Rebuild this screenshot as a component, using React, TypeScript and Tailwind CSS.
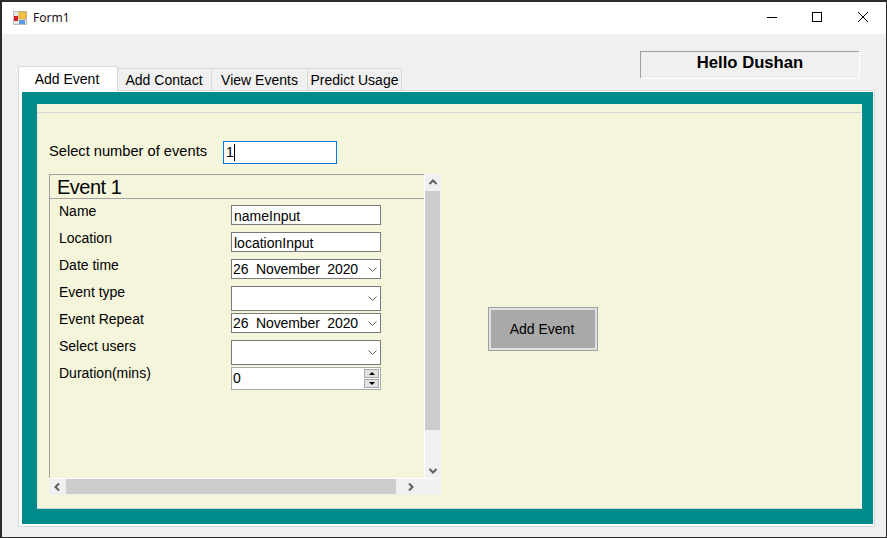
import type { ReactNode } from 'react'

const fields = [
  { label: 'Name', kind: 'text', value: 'nameInput', height: 'h-5' },
  { label: 'Location', kind: 'text', value: 'locationInput', height: 'h-5' },
  { label: 'Date time', kind: 'date', value: '26  November  2020', height: 'h-5' },
  { label: 'Event type', kind: 'combo', value: '', height: 'h-[25px]' },
  { label: 'Event Repeat', kind: 'date', value: '26  November  2020', height: 'h-5' },
  { label: 'Select users', kind: 'combo', value: '', height: 'h-[25px]' },
]

const tabs = [
  { label: 'Add Contact', width: 'w-[94px]', pad: 'pr-[1px]' },
  { label: 'View Events', width: 'w-[96px]', pad: '' },
  { label: 'Predict Usage', width: 'w-[94px]', pad: '' },
]

function Chevron({ dir }: { dir: 'up' | 'down' | 'left' | 'right' }) {
  const d = {
    up: 'M1.5 6 L5 2.5 L8.5 6',
    down: 'M1.5 4 L5 7.5 L8.5 4',
    left: 'M6 1.5 L2.5 5 L6 8.5',
    right: 'M4 1.5 L7.5 5 L4 8.5',
  }[dir]
  return (
    <svg width="10" height="10" viewBox="0 0 10 10" fill="none" stroke="#606060" strokeWidth="2">
      <path d={d} />
    </svg>
  )
}

function SmallArrow() {
  return (
    <svg width="9" height="5" viewBox="0 0 9 5" fill="none" stroke="#606060" strokeWidth="1" className="shrink-0">
      <path d="M0.5 0.5 L4.5 4.5 L8.5 0.5" />
    </svg>
  )
}

function Box({ height, children }: { height: string; children?: ReactNode }) {
  return (
    <div className={`${height} w-[150px] border border-[#7a7a7a] bg-white flex items-center text-[14px] text-black whitespace-pre`}>
      {children}
    </div>
  )
}

function Field({ kind, value, height }: { kind: string; value: string; height: string }) {
  if (kind === 'text') {
    return (
      <Box height={height}>
        <span className="pl-[2px] pt-[2px]">{value}</span>
      </Box>
    )
  }
  return (
    <Box height={height}>
      <span className="pl-[1px] flex-1 tracking-[-0.1px]">{value}</span>
      <span className="pr-[3px] flex">
        <SmallArrow />
      </span>
    </Box>
  )
}

function Spinner() {
  return (
    <div className="h-[23px] w-[150px] border border-[#a9a9a9] bg-white flex items-center text-[14px] text-black">
      <span className="pl-[1px] flex-1">0</span>
      <div className="w-[15px] h-[19px] mr-[1px] flex flex-col gap-px">
        <div className="h-[9px] bg-[#e1e1e1] border border-[#a9a9a9] flex items-center justify-center">
          <div className="w-0 h-0 border-x-[3px] border-x-transparent border-b-[3px] border-b-black" />
        </div>
        <div className="h-[9px] bg-[#e1e1e1] border border-[#a9a9a9] flex items-center justify-center">
          <div className="w-0 h-0 border-x-[3px] border-x-transparent border-t-[3px] border-t-black" />
        </div>
      </div>
    </div>
  )
}

function EventPanel() {
  return (
    <div className="w-[392px] h-[321px] flex flex-col bg-[#f0f0f0]">
      <div className="flex h-[304px]">
        <div className="w-[375px] bg-[#f5f5dc] border-t border-l border-[#a0a0a0] border-r-0 flex flex-col">
          <div className="h-[24px] border-b border-[#a0a0a0] pl-[7px] text-[20px] tracking-[-0.5px] leading-[24px] text-black">
            Event 1
          </div>
          <div className="pl-[9px] pt-[6px] flex flex-col">
            {fields.map((f) => (
              <div key={f.label} className="h-[27px] flex items-start">
                <div className="w-[172px] text-[14px] leading-[14px] -mt-px text-black">{f.label}</div>
                <Field kind={f.kind} value={f.value} height={f.height} />
              </div>
            ))}
            <div className="h-[27px] flex items-start">
              <div className="w-[172px] text-[14px] leading-[14px] -mt-px text-black">Duration(mins)</div>
              <Spinner />
            </div>
          </div>
        </div>
        <div className="w-[17px] border-l border-white flex flex-col bg-[#f0f0f0]">
          <div className="h-[17px] w-[15px] flex items-center justify-center">
            <Chevron dir="up" />
          </div>
          <div className="h-[239px] w-[15px] bg-[#cdcdcd]" />
          <div className="flex-1" />
          <div className="h-[17px] w-[15px] flex items-center justify-center">
            <Chevron dir="down" />
          </div>
        </div>
      </div>
      <div className="h-[17px] flex border-t border-white">
        <div className="w-[17px] flex items-center justify-center">
          <Chevron dir="left" />
        </div>
        <div className="w-[330px] h-[15px] bg-[#cdcdcd]" />
        <div className="w-[28px] flex items-center justify-center">
          <Chevron dir="right" />
        </div>
      </div>
    </div>
  )
}

export default function App() {
  return (
    <div className="w-[887px] h-[538px] flex flex-col bg-[#f0f0f0] border-t-2 border-l-2 border-r border-b border-[#2b2b2b] font-['Liberation_Sans',Arial,sans-serif] text-black overflow-hidden">
      <div className="h-8 shrink-0 bg-white flex items-center">
        <svg width="14" height="14" viewBox="0 0 14 14" className="ml-[11px] -mt-[1px]">
          <rect x="0" y="0" width="14" height="14" fill="#bdbdbd" />
          <rect x="1" y="1" width="12" height="12" fill="#e8e8e8" />
          <rect x="6" y="1" width="7" height="7" fill="#f5c242" stroke="#d29a2c" strokeWidth="0.6" />
          <rect x="1" y="5" width="4" height="5" fill="#d42020" />
          <rect x="6" y="9" width="6" height="4" fill="#5a9ae0" />
        </svg>
        <span className="ml-[6px] font-['Noto_Sans',sans-serif] text-[12px] text-[#1a1020]">Form1</span>
        <div className="ml-auto pb-[2px] flex items-center">
          <svg width="10" height="10" viewBox="0 0 10 10" className="mr-[35px]" stroke="#000" fill="none">
            <path d="M0 5.5 H10" />
          </svg>
          <svg width="10" height="10" viewBox="0 0 10 10" className="mr-[36px]" stroke="#000" fill="none">
            <rect x="0.5" y="0.5" width="9" height="9" />
          </svg>
          <svg width="10" height="10" viewBox="0 0 10 10" className="mr-[18px]" stroke="#000" fill="none">
            <path d="M0 0 L10 10 M10 0 L0 10" />
          </svg>
        </div>
      </div>

      <div className="flex-1 pl-4 flex flex-col">
        <div className="h-14 shrink-0 flex items-end">
          <div className="relative z-10 -mb-px w-[100px] h-[25px] pr-[2px] bg-white border-t border-x border-[#d9d9d9] text-[14px] flex items-center justify-center">
            Add Event
          </div>
          {tabs.map((t) => (
            <div
              key={t.label}
              className={`${t.width} ${t.pad} h-[22px] pt-[2px] border-t border-r border-[#d9d9d9] text-[14px] flex items-center justify-center whitespace-nowrap`}
            >
              {t.label}
            </div>
          ))}
          <div className="ml-[238px] mb-3 w-[219px] h-[27px] border-t border-l border-[#a0a0a0] shadow-[1px_1px_0_#ffffff] text-[16.67px] font-bold leading-[22px] text-center">
            Hello Dushan
          </div>
        </div>

        <div className="w-[857px] h-[437px] bg-white border border-[#d9d9d9] pt-[1px] pl-[3px] pr-[1px] pb-[2px]">
          <div className="w-full h-full bg-[#008b8b] pt-3 pl-[15px] pr-[11px] pb-[15px]">
            <div className="w-full h-full bg-[#f5f5dc] pt-2">
              <div className="w-full h-full border-t border-[#d8d8d8] border-l border-l-[#e8e8e0] border-r border-r-white border-b border-b-[#d0d0d0] pl-[11px]">
                <div className="pt-[28px] h-[61px] flex items-start">
                  <div className="w-[174px] text-[14.67px] leading-[20px]">Select number of events</div>
                  <div className="w-[114px] h-[23px] bg-white border border-[#0078d7] text-[14px] flex items-center pl-[2px]">
                    <span>1</span>
                    <span className="w-px h-[17px] bg-black" />
                  </div>
                </div>
                <div className="flex items-start">
                  <EventPanel />
                  <div className="ml-[47px] mt-[133px] w-[110px] h-[44px] border border-[#a0a0a0] bg-[#a9a9a9] shadow-[inset_0_0_0_2px_#e0e0e0] text-[14px] pr-[2px] flex items-center justify-center">
                    Add Event
                  </div>
                </div>
              </div>
            </div>
          </div>
        </div>
      </div>
    </div>
  )
}
